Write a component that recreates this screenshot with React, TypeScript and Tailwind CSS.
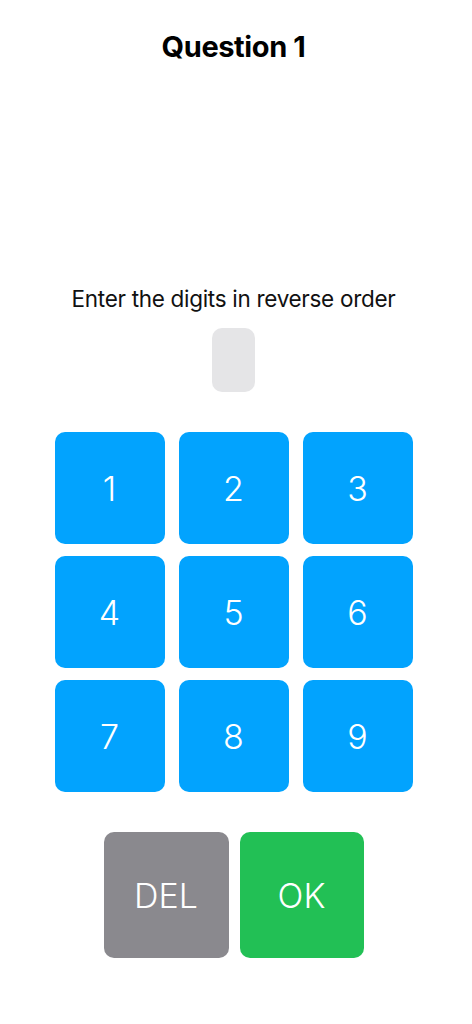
const digits = ["1", "2", "3", "4", "5", "6", "7", "8", "9"]

export default function App() {
  return (
    <div className="flex min-h-[1024px] w-[472px] flex-col items-center bg-white pr-[5px] font-['Inter',sans-serif] text-black">
      <h1 className="mt-[29px] text-[29px] leading-[36px] font-bold tracking-[-0.4px]">Question 1</h1>
      <p className="mt-[219px] text-[22.5px] leading-[30px] tracking-[-0.3px] text-[#111]">
        Enter the digits in reverse order
      </p>
      <div className="mt-[14px] h-[64px] w-[43px] rounded-[10px] bg-[#e5e5e7]" />
      <div className="mt-[40px] grid grid-cols-[repeat(3,110px)] gap-x-[14px] gap-y-[12px]">
        {digits.map((d) => (
          <button
            key={d}
            className="flex h-[112px] items-center justify-center rounded-[10px] bg-[#02a3fe] text-[34px] font-light text-white"
          >
            {d}
          </button>
        ))}
      </div>
      <div className="mt-[40px] flex gap-[11px]">
        <button className="flex h-[126px] w-[125px] items-center justify-center rounded-[10px] bg-[#8a898e] text-[34px] font-light text-white">
          DEL
        </button>
        <button className="flex h-[126px] w-[124px] items-center justify-center rounded-[10px] bg-[#22c055] text-[34px] font-light text-white">
          OK
        </button>
      </div>
    </div>
  )
}
